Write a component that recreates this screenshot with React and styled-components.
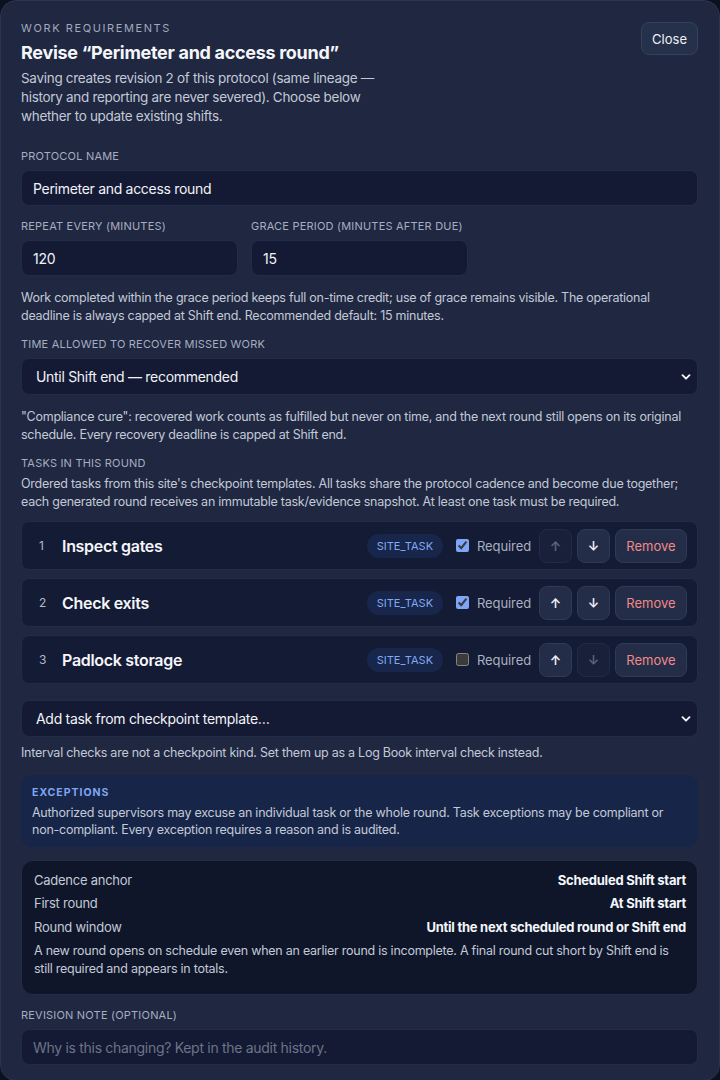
import styled, { createGlobalStyle } from 'styled-components';

const GlobalStyle = createGlobalStyle`
  * { box-sizing: border-box; }
  html, body { margin: 0; padding: 0; background: #0c111e; }
  body {
    font-family: Inter, "Noto Sans", sans-serif;
    color: #e8ebf2;
    -webkit-font-smoothing: antialiased;
  }
`;

const tasks = [
  { n: 1, name: 'Inspect gates', required: true, up: false, down: true },
  { n: 2, name: 'Check exits', required: true, up: true, down: true },
  { n: 3, name: 'Padlock storage', required: false, up: true, down: false },
];

const summary = [
  ['Cadence anchor', 'Scheduled Shift start'],
  ['First round', 'At Shift start'],
  ['Round window', 'Until the next scheduled round or Shift end'],
];

export default function App() {
  return (
    <>
      <GlobalStyle />
      <Card>
        <Header>
          <div>
            <Kicker>Work requirements</Kicker>
            <Title>Revise “Perimeter and access round”</Title>
            <Lead>
              Saving creates revision 2 of this protocol (same lineage — history and reporting are never
              severed). Choose below whether to update existing shifts.
            </Lead>
          </div>
          <CloseButton>Close</CloseButton>
        </Header>

        <Field>
          <Label>Protocol name</Label>
          <Input defaultValue="Perimeter and access round" />
        </Field>

        <Pair>
          <Field>
            <Label>Repeat every (minutes)</Label>
            <Input defaultValue="120" />
          </Field>
          <Field>
            <Label>Grace period (minutes after due)</Label>
            <Input defaultValue="15" />
          </Field>
        </Pair>
        <Help>
          Work completed within the grace period keeps full on-time credit; use of grace remains visible. The
          operational deadline is always capped at Shift end. Recommended default: 15 minutes.
        </Help>

        <Field>
          <Label>Time allowed to recover missed work</Label>
          <SelectWrap>
            <Select defaultValue="shift">
              <option value="shift">Until Shift end — recommended</option>
            </Select>
            <Chevron />
          </SelectWrap>
        </Field>
        <Help>
          "Compliance cure": recovered work counts as fulfilled but never on time, and the next round still
          opens on its original schedule. Every recovery deadline is capped at Shift end.
        </Help>

        <Field>
          <Label>Tasks in this round</Label>
          <Help $tight>
            Ordered tasks from this site's checkpoint templates. All tasks share the protocol cadence and become
            due together; each generated round receives an immutable task/evidence snapshot. At least one task
            must be required.
          </Help>
        </Field>

        <TaskList>
          {tasks.map(t => (
            <TaskRow key={t.n}>
              <TaskNum>{t.n}</TaskNum>
              <TaskName>{t.name}</TaskName>
              <Badge>SITE_TASK</Badge>
              <Check>
                <input type="checkbox" defaultChecked={t.required} />
                Required
              </Check>
              <IconButton disabled={!t.up}>↑</IconButton>
              <IconButton disabled={!t.down}>↓</IconButton>
              <RemoveButton>Remove</RemoveButton>
            </TaskRow>
          ))}
        </TaskList>

        <AddBlock>
          <SelectWrap>
            <Select defaultValue="">
              <option value="">Add task from checkpoint template…</option>
            </Select>
            <Chevron />
          </SelectWrap>
          <Help>Interval checks are not a checkpoint kind. Set them up as a Log Book interval check instead.</Help>
        </AddBlock>

        <Notice>
          <NoticeTitle>Exceptions</NoticeTitle>
          <NoticeText>
            Authorized supervisors may excuse an individual task or the whole round. Task exceptions may be
            compliant or non-compliant. Every exception requires a reason and is audited.
          </NoticeText>
        </Notice>

        <Summary>
          {summary.map(([k, v]) => (
            <SummaryRow key={k}>
              <span>{k}</span>
              <strong>{v}</strong>
            </SummaryRow>
          ))}
          <SummaryNote>
            A new round opens on schedule even when an earlier round is incomplete. A final round cut short by
            Shift end is still required and appears in totals.
          </SummaryNote>
        </Summary>

        <Field>
          <Label>Revision note (optional)</Label>
          <Input placeholder="Why is this changing? Kept in the audit history." />
        </Field>
      </Card>
    </>
  );
}

function Chevron() {
  return (
    <ChevronIcon viewBox="0 0 10 10" width="10" height="10">
      <path d="M1.5 3.2 L5 6.7 L8.5 3.2" fill="none" stroke="#f1f3f8" strokeWidth="1.9" strokeLinecap="round" strokeLinejoin="round" />
    </ChevronIcon>
  );
}

const Card = styled.div`
width: 720px;
min-height: 1078px;
background: #1f2741;
border: 1px solid #2b3452;
border-radius: 16px;
padding: 20px 21px 15px 20px;
display: flex;
flex-direction: column;
gap: 13px;
`
const Header = styled.div`
display: flex;
justify-content: space-between;
align-items: flex-start;
margin-bottom: 10px;
`
const Kicker = styled.div`
font-size: 11px;
line-height: 14px;
letter-spacing: 1.6px;
text-transform: uppercase;
color: #a1a9bc;
`
const Title = styled.h1`
margin: 6px 0 0 0;
font-size: 18px;
line-height: 24px;
font-weight: 700;
letter-spacing: -0.3px;
color: #f4f6fa;
`
const Lead = styled.p`
margin: 4px 0 0 0;
width: 370px;
font-size: 13.5px;
line-height: 19px;
letter-spacing: -0.3px;
color: #c3c9d6;
`
const CloseButton = styled.button`
margin-top: 1px;
height: 33px;
padding: 0 10px;
background: #25304b;
border: 1px solid #34405c;
border-radius: 8px;
color: #eef1f6;
font-family: inherit;
font-size: 13px;
`
const Field = styled.div`
display: flex;
flex-direction: column;
gap: 7px;
`
const Pair = styled.div`
display: grid;
grid-template-columns: 217px 217px;
gap: 13px;
`
const Label = styled.div`
font-size: 11px;
line-height: 14px;
text-transform: uppercase;
letter-spacing: 0.2px;
color: #a6aec0;
`
const Input = styled.input`
width: 100%;
height: 36px;
padding: 0 11px;
background: #141a33;
border: 1px solid #232c46;
border-radius: 8px;
color: #f1f3f8;
font-family: inherit;
font-size: 14px;
letter-spacing: -0.3px;
outline: none;
  &::placeholder{
      color: #6c7489;
  }
`
const SelectWrap = styled.div`
position: relative;
`
const Select = styled.select`
width: 100%;
height: 37px;
padding: 0 14px;
appearance: none;
background: #141a33;
border: 1px solid #232c46;
border-radius: 8px;
color: #f1f3f8;
font-family: inherit;
font-size: 14px;
letter-spacing: -0.3px;
`
const ChevronIcon = styled.svg`
position: absolute;
right: 7px;
top: 50%;
transform: translateY(-50%);
pointer-events: none;
`
const Help = styled.p`
margin: ${p => (p.$tight ? '-2px 0 0 0' : '0')};
font-size: 12.5px;
line-height: 17.5px;
letter-spacing: -0.25px;
color: #c3c9d6;
`
const TaskList = styled.div`
display: flex;
flex-direction: column;
gap: 8px;
margin-top: -2px;
`
const TaskRow = styled.div`
height: 49px;
display: flex;
align-items: center;
gap: 5px;
padding: 0 10px 0 17px;
background: #141b34;
border: 1px solid #232c46;
border-radius: 8px;
`
const TaskNum = styled.span`
width: 18px;
font-size: 12px;
color: #b3b9c7;
`
const TaskName = styled.span`
flex: 1;
font-size: 16px;
font-weight: 600;
letter-spacing: -0.3px;
color: #f4f6fa;
`
const Badge = styled.span`
height: 24px;
padding: 0 10px;
display: flex;
align-items: center;
border-radius: 12px;
background: #17264a;
color: #83a8f4;
font-size: 11px;
margin-right: 8px;
`
const Check = styled.label`
display: flex;
align-items: center;
gap: 8px;
margin-right: 3px;
font-size: 13px;
letter-spacing: -0.1px;
color: #a9b0c0;
color-scheme: dark;
  input{
      margin: 0;
      width: 13px;
      height: 13px;
      accent-color: #7ea5f7;
  }
`
const IconButton = styled.button`
width: 33px;
height: 34px;
display: flex;
align-items: center;
justify-content: center;
background: ${p => (p.disabled ? '#19213a' : '#232d47')};
border: 1px solid ${p => (p.disabled ? '#222b45' : '#2f3a55')};
border-radius: 8px;
color: ${p => (p.disabled ? '#5d667d' : '#f1f3f8')};
font-family: inherit;
font-size: 13px;
font-weight: 600;
`
const RemoveButton = styled.button`
width: 72px;
height: 34px;
background: #232d47;
border: 1px solid #2f3a55;
border-radius: 8px;
color: #f08a8a;
font-family: inherit;
font-size: 13px;
`
const AddBlock = styled.div`
display: flex;
flex-direction: column;
gap: 7px;
margin-top: 3px;
`
const Notice = styled.div`
padding: 11px 11px 8px 11px;
background: #172548;
border-radius: 12px;
`
const NoticeTitle = styled.div`
font-size: 10.5px;
line-height: 14px;
font-weight: 700;
letter-spacing: 1px;
text-transform: uppercase;
color: #7fa5f3;
`
const NoticeText = styled.p`
margin: 4px 0 0 0;
font-size: 12.5px;
line-height: 17.5px;
letter-spacing: -0.25px;
color: #c3c9d6;
`
const Summary = styled.div`
padding: 11px 11px 17px 12px;
background: #0f162a;
border: 1px solid #232c46;
border-radius: 12px;
display: flex;
flex-direction: column;
gap: 6px;
`
const SummaryRow = styled.div`
display: flex;
justify-content: space-between;
font-size: 13px;
line-height: 17.5px;
letter-spacing: -0.25px;
color: #c3c9d6;
  strong{
      font-weight: 700;
      color: #f4f6fa;
  }
`
const SummaryNote = styled.p`
margin: 0;
font-size: 12.5px;
line-height: 17.5px;
letter-spacing: -0.25px;
color: #c3c9d6;
`
